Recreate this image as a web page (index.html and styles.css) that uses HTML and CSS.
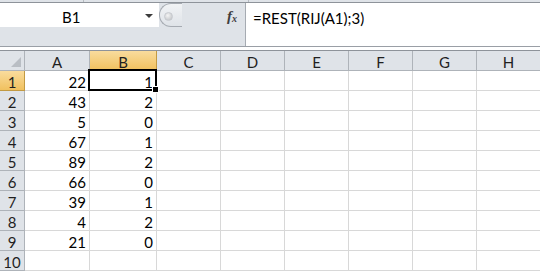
FILE: index.html
```html
<!DOCTYPE html>
<html>
<head>
<meta charset="utf-8">
<link rel="stylesheet" href="styles.css">
</head>
<body>
<div class="app">
  <div class="topstrip"><span class="tick t1"></span><span class="tick t2"></span></div>
  <div class="fbar">
    <div class="leftpart">
      <div class="namerow">
        <div class="namebox"><span class="nametext">B1</span><span class="ddarrow"></span></div>
        <div class="grip"><span class="dot"></span></div>
        <div class="fxarea"><span class="fx">f<sub>x</sub></span></div>
      </div>
      <div class="leftgap"></div>
    </div>
    <div class="formula">=REST(RIJ(A1);3)</div>
  </div>
  <div class="sep"></div>
  <div class="grid">
    <div class="ch corner"><span class="tri"></span></div>
    <div class="ch">A</div>
    <div class="ch sel">B</div>
    <div class="ch">C</div>
    <div class="ch">D</div>
    <div class="ch">E</div>
    <div class="ch">F</div>
    <div class="ch">G</div>
    <div class="ch last">H</div>

    <div class="rh sel">1</div><div class="c num">22</div><div class="c num active">1<span class="selbox"><span class="handle"></span></span></div><div class="c"></div><div class="c"></div><div class="c"></div><div class="c"></div><div class="c"></div><div class="c last"></div>
    <div class="rh">2</div><div class="c num">43</div><div class="c num">2</div><div class="c"></div><div class="c"></div><div class="c"></div><div class="c"></div><div class="c"></div><div class="c last"></div>
    <div class="rh">3</div><div class="c num">5</div><div class="c num">0</div><div class="c"></div><div class="c"></div><div class="c"></div><div class="c"></div><div class="c"></div><div class="c last"></div>
    <div class="rh">4</div><div class="c num">67</div><div class="c num">1</div><div class="c"></div><div class="c"></div><div class="c"></div><div class="c"></div><div class="c"></div><div class="c last"></div>
    <div class="rh">5</div><div class="c num">89</div><div class="c num">2</div><div class="c"></div><div class="c"></div><div class="c"></div><div class="c"></div><div class="c"></div><div class="c last"></div>
    <div class="rh">6</div><div class="c num">66</div><div class="c num">0</div><div class="c"></div><div class="c"></div><div class="c"></div><div class="c"></div><div class="c"></div><div class="c last"></div>
    <div class="rh">7</div><div class="c num">39</div><div class="c num">1</div><div class="c"></div><div class="c"></div><div class="c"></div><div class="c"></div><div class="c"></div><div class="c last"></div>
    <div class="rh">8</div><div class="c num">4</div><div class="c num">2</div><div class="c"></div><div class="c"></div><div class="c"></div><div class="c"></div><div class="c"></div><div class="c last"></div>
    <div class="rh">9</div><div class="c num">21</div><div class="c num">0</div><div class="c"></div><div class="c"></div><div class="c"></div><div class="c"></div><div class="c"></div><div class="c last"></div>
    <div class="rh">10</div><div class="c"></div><div class="c"></div><div class="c"></div><div class="c"></div><div class="c"></div><div class="c"></div><div class="c"></div><div class="c last"></div>
  </div>
</div>
</body>
</html>
```

FILE: styles.css
```css
html, body {
  margin: 0;
  padding: 0;
  background: #ffffff;
}
.app {
  width: 540px;
  height: 271px;
  overflow: hidden;
  font-family: "Lato", "Liberation Sans", sans-serif;
  font-size: 15px;
  color: #000;
}
.topstrip {
  height: 2px;
  background: #dfe3e8;
  border-bottom: 1px solid #8e939a;
  position: relative;
}
.tick {
  position: absolute;
  top: 0;
  width: 1px;
  height: 2px;
  background: #b6bbc1;
}
.t1 { left: 83px; }
.t2 { left: 248px; }
.fbar {
  display: flex;
  height: 43px;
  border-bottom: 1px solid #9a9fa6;
}
.leftpart {
  width: 245px;
  display: flex;
  flex-direction: column;
  background: #dfe3e8;
}
.namerow {
  display: flex;
  height: 24px;
}
.namebox {
  width: 159px;
  background: #fff;
  position: relative;
  display: flex;
  align-items: center;
  padding-top: 3px;
  box-sizing: border-box;
}
.nametext {
  margin-left: 62px;
  color: #000;
  font-size: 15px;
}
.ddarrow {
  position: absolute;
  left: 145px;
  top: 11px;
  width: 0;
  height: 0;
  border-left: 4px solid transparent;
  border-right: 4px solid transparent;
  border-top: 4px solid #3c3c3c;
}
.grip {
  width: 22px;
  height: 22px;
  border: 1px solid #a6abb2;
  border-right: none;
  border-radius: 12px 0 0 12px;
  background: linear-gradient(#f1f3f5, #dfe3e8);
  position: relative;
  box-sizing: content-box;
}
.dot {
  position: absolute;
  left: 4px;
  top: 8px;
  width: 9px;
  height: 9px;
  border-radius: 50%;
  background: radial-gradient(circle at 40% 35%, #f4f4f4, #b9bcc0);
  border: 1px solid #c7cacf;
  box-sizing: border-box;
}
.fxarea {
  flex: 1;
  display: flex;
  align-items: center;
  justify-content: flex-end;
  padding-right: 8px;
  padding-top: 2px;
}
.fx {
  font-family: "Liberation Serif", serif;
  font-style: italic;
  font-weight: bold;
  font-size: 15px;
  color: #3f3f3f;
}
.fx sub {
  font-size: 10px;
  vertical-align: -1px;
}
.leftgap {
  flex: 1;
}
.formula {
  flex: 1;
  background: #fff;
  border-left: 1px solid #a6abb2;
  padding: 6px 0 0 7px;
  font-size: 15px;
}
.sep {
  height: 3px;
  background: #fff;
  border-bottom: 1px solid #8e939a;
}
.grid {
  display: grid;
  grid-template-columns: 25px 65px 67px 64px 64px 64px 64px 64px 64px;
  grid-template-rows: 20px repeat(10, 20px);
}
.grid > div {
  box-sizing: border-box;
}
.ch, .rh {
  background: #dfe3e8;
  color: #1f1f1f;
  border-right: 1px solid #aeb3b9;
  border-bottom: 1px solid #aeb3b9;
  display: flex;
  align-items: center;
  justify-content: center;
  font-size: 15px;
  padding-top: 2px;
}
.ch.sel, .rh.sel {
  background: linear-gradient(#f9dc9d, #f1c15f);
  border-bottom-color: #c29a43;
  border-right-color: #c29a43;
}
.corner {
  position: relative;
}
.tri {
  position: absolute;
  right: 3px;
  bottom: 3px;
  width: 0;
  height: 0;
  border-left: 10px solid transparent;
  border-bottom: 10px solid #b9bec4;
}
.c {
  border-right: 1px solid #d8d8d8;
  border-bottom: 1px solid #d8d8d8;
  display: flex;
  align-items: center;
  padding-top: 2px;
}
.num {
  justify-content: flex-end;
  padding-right: 3px;
}
.active {
  position: relative;
}
.selbox {
  position: absolute;
  left: -2px;
  top: -2px;
  right: -1px;
  bottom: -1px;
  border: 2px solid #000;
}
.handle {
  position: absolute;
  right: -4px;
  bottom: -4px;
  width: 5px;
  height: 5px;
  background: #000;
  border: 1px solid #fff;
}
```
